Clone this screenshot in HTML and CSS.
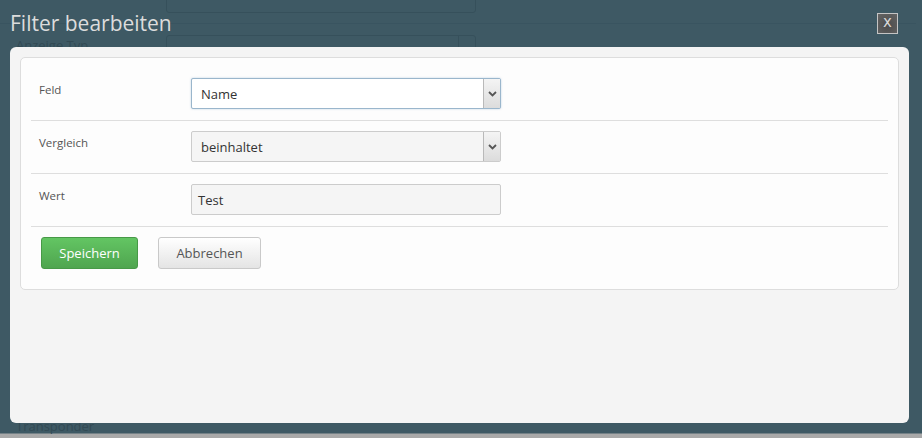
FILE: index.html
```html
<!DOCTYPE html>
<html lang="de">
<head>
<meta charset="utf-8">
<title>Filter bearbeiten</title>
<link rel="stylesheet" href="styles.css">
</head>
<body>
<div class="screen">
  <div class="ghost-layer" aria-hidden="true">
    <div class="ghost-line"></div>
    <div class="ghost-input g1"></div>
    <div class="ghost-input g2"><span class="ghost-sq"></span></div>
    <div class="ghost-text gt1">Anzeige Typ</div>
    <div class="ghost-text gt2">Transponder</div>
  </div>
  <div class="dialog">
    <div class="dialog-head">
      <h1 class="dialog-title">Filter bearbeiten</h1>
      <button class="close-btn">x</button>
    </div>
    <div class="dialog-body">
      <div class="card">
        <div class="row">
          <label class="lbl">Feld</label>
          <div class="select focus"><span class="val">Name</span><span class="arrow"><svg width="9" height="6" viewBox="0 0 9 6"><path d="M1 1 L4.5 4.5 L8 1" fill="none" stroke="#555" stroke-width="1.8"/></svg></span></div>
        </div>
        <div class="row">
          <label class="lbl">Vergleich</label>
          <div class="select grey"><span class="val">beinhaltet</span><span class="arrow"><svg width="9" height="6" viewBox="0 0 9 6"><path d="M1 1 L4.5 4.5 L8 1" fill="none" stroke="#555" stroke-width="1.8"/></svg></span></div>
        </div>
        <div class="row">
          <label class="lbl">Wert</label>
          <div class="input grey"><span class="val">Test</span></div>
        </div>
        <div class="actions">
          <button class="btn btn-green">Speichern</button>
          <button class="btn btn-light">Abbrechen</button>
        </div>
      </div>
    </div>
  </div>
</div>
</body>
</html>
```

FILE: styles.css
```css
html, body {
  margin: 0;
  padding: 0;
}
body {
  width: 922px;
  height: 438px;
  overflow: hidden;
  background: #3c5762;
  font-family: "Open Sans", "DejaVu Sans", sans-serif;
}
.screen {
  position: relative;
  width: 922px;
  height: 438px;
  background: linear-gradient(to bottom, #3e5964 0, #3e5964 433px, #a9a9a9 434px, #a9a9a9 438px);
}
.ghost-layer {
  position: absolute;
  inset: 0;
}
.ghost-line {
  position: absolute;
  left: 0;
  top: 23px;
  width: 916px;
  height: 1px;
  background: #395460;
}
.ghost-input {
  position: absolute;
  left: 166px;
  width: 308px;
  border: 1px solid #36505b;
  border-radius: 3px;
}
.g1 { top: -10px; height: 21px; }
.g2 { top: 35px; height: 20px; }
.ghost-sq {
  position: absolute;
  right: 0;
  top: 0;
  width: 16px;
  height: 14px;
  border-left: 1px solid #36505b;
  border-bottom: 1px solid #36505b;
}
.ghost-text {
  position: absolute;
  left: 16px;
  font-size: 13px;
  color: #324a54;
}
.gt1 { top: 36px; }
.gt2 { top: 417px; }

.dialog {
  position: relative;
  width: 916px;
  height: 433px;
  box-sizing: border-box;
  display: flex;
  flex-direction: column;
  padding: 0 7px 10px 10px;
}
.dialog-head {
  height: 47px;
  display: flex;
  align-items: flex-start;
  justify-content: space-between;
}
.dialog-title {
  margin: 8px 0 0 0;
  font-size: 21px;
  font-weight: normal;
  line-height: 30px;
  color: #dcdcdc;
}
.close-btn {
  margin: 13px 11px 0 0;
  width: 21px;
  height: 21px;
  padding: 0 0 3px 0;
  box-sizing: border-box;
  border: 1px solid #c4c4c4;
  background: radial-gradient(circle at 50% 60%, #4c4c4c 0, #646464 100%);
  color: #d8d8d8;
  font-family: "DejaVu Sans", sans-serif;
  font-size: 15px;
  line-height: 16px;
}
.dialog-body {
  flex: 1;
  background: #f4f4f4;
  border-radius: 6px;
  padding: 10px;
}
.card {
  background: #fdfdfd;
  border: 1px solid #dddddd;
  border-radius: 5px;
  padding: 10px 10px 20px 10px;
}
.row {
  display: flex;
  align-items: flex-start;
  padding: 10px 0 11px 8px;
  border-bottom: 1px solid #dedede;
}
.lbl {
  width: 152px;
  margin-top: 3px;
  font-size: 11.5px;
  line-height: 18px;
  color: #555;
}
.select, .input {
  position: relative;
  width: 310px;
  height: 31px;
  box-sizing: border-box;
  border: 1px solid #cccccc;
  border-radius: 2px;
  display: flex;
  align-items: center;
  font-size: 13px;
  color: #333;
}
.select .val { padding-left: 9px; }
.input .val { padding-left: 6px; }
.select.focus {
  background: #ffffff;
  border-color: #9ab6cc;
  box-shadow: 0 0 2px rgba(120, 160, 200, 0.5);
}
.grey { background: #f5f5f5; }
.arrow {
  position: absolute;
  right: 0;
  top: 0;
  bottom: 0;
  width: 16px;
  border-left: 1px solid #b9b9b9;
  background: linear-gradient(to bottom, #f4f4f4, #dcdcdc);
  display: flex;
  align-items: center;
  justify-content: center;
}
.actions {
  display: flex;
  gap: 20px;
  padding: 10px 0 0 10px;
}
.btn {
  height: 32px;
  box-sizing: border-box;
  border-radius: 3px;
  font-family: "Open Sans", "DejaVu Sans", sans-serif;
  font-size: 13px;
  padding: 0;
  line-height: 30px;
}
.btn-green {
  width: 97px;
  color: #ffffff;
  background: linear-gradient(to bottom, #63c563, #4fa54f);
  border: 1px solid #479947;
}
.btn-light {
  width: 103px;
  color: #555;
  background: linear-gradient(to bottom, #ffffff, #e4e4e4);
  border: 1px solid #c9c9c9;
}
```
